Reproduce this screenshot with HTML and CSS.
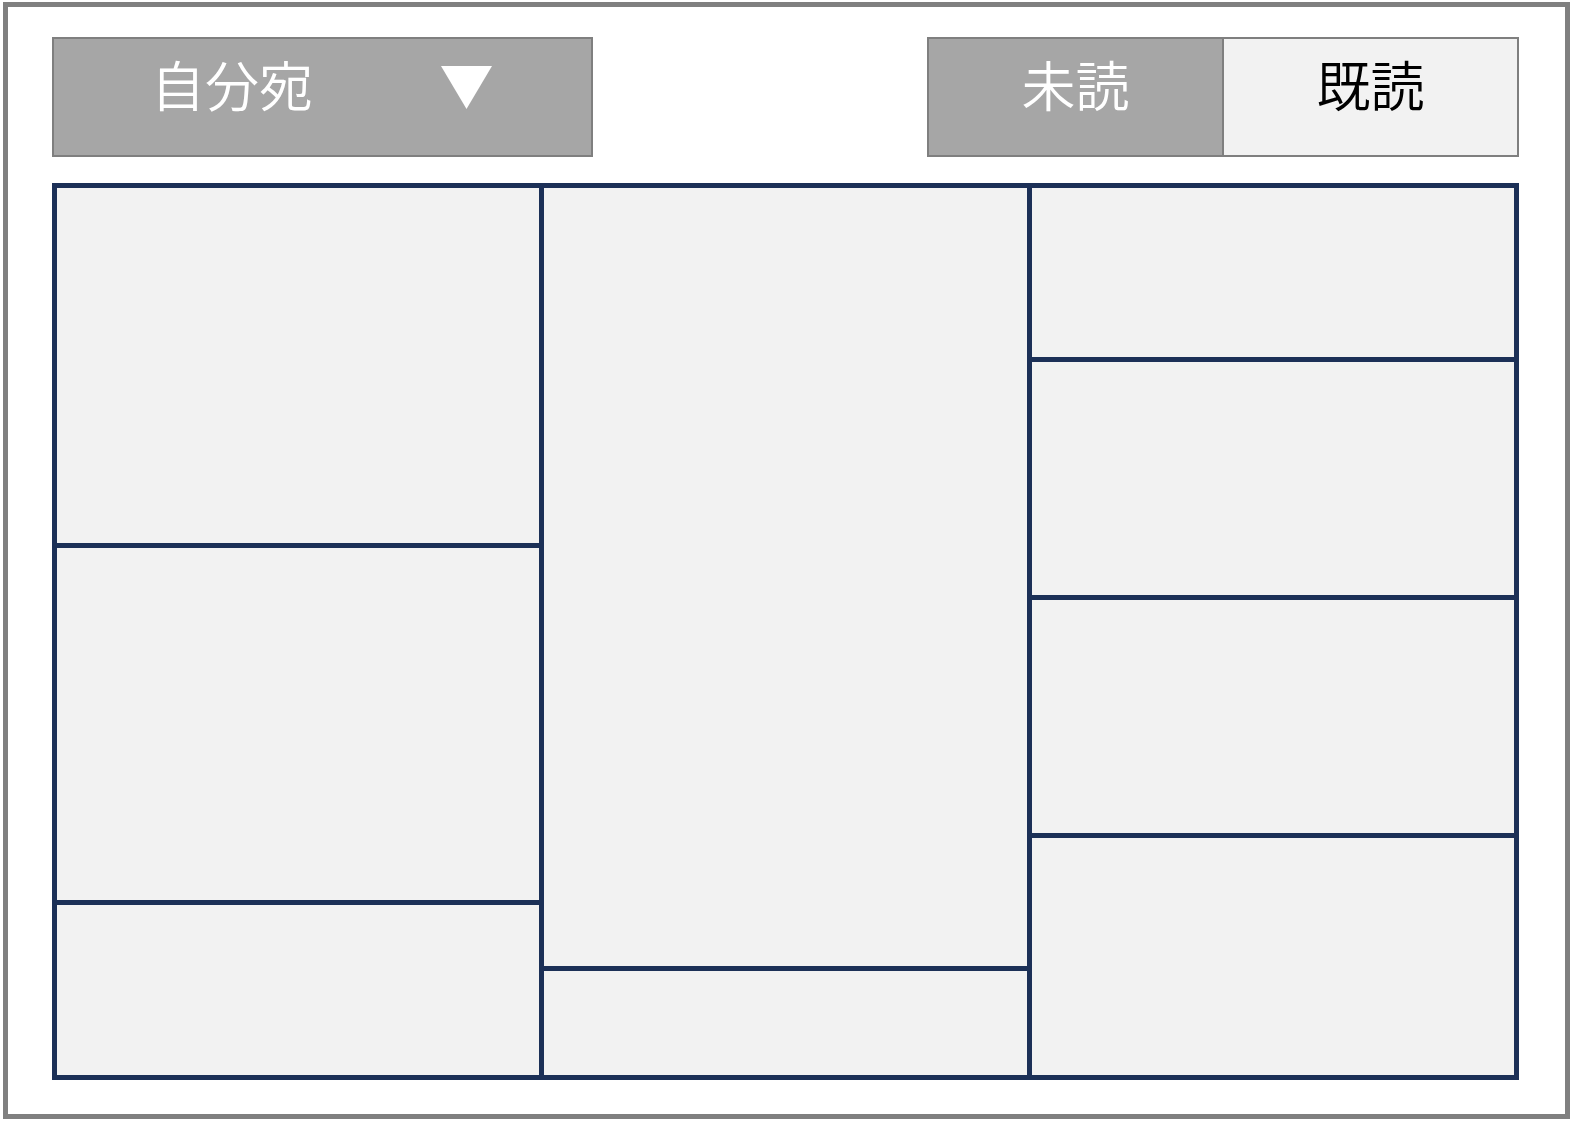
FILE: index.html
```html
<!DOCTYPE html>
<html lang="ja">
<head>
    <meta charset="UTF-8">
    <title>メッセージ一覧</title>
    <link rel="stylesheet" href="styles.css">
</head>
<body>
<div class="frame">
    <div class="header">
        <div class="dropdown">
            <span class="dropdown-label">自分宛</span>
            <svg class="dropdown-arrow" width="51" height="43" viewBox="0 0 51 43">
                <polygon points="0,0 51,0 25.5,43" fill="#fff" />
            </svg>
        </div>
        <div class="toggle">
            <div class="toggle-item active">未読</div>
            <div class="toggle-item">既読</div>
        </div>
    </div>

    <div class="board">
        <div class="column">
            <div class="cell" style="height: 355px"></div>
            <div class="cell" style="height: 352px"></div>
            <div class="cell grow"></div>
        </div>
        <div class="column">
            <div class="cell" style="height: 778px"></div>
            <div class="cell grow"></div>
        </div>
        <div class="column">
            <div class="cell" style="height: 169px"></div>
            <div class="cell" style="height: 233px"></div>
            <div class="cell" style="height: 233px"></div>
            <div class="cell grow"></div>
        </div>
    </div>
</div>
</body>
</html>
```

FILE: styles.css
```css
* {
    margin: 0;
    padding: 0;
    box-sizing: border-box;
}
body {
    background: #fff;
    font-family: "Noto Sans CJK JP", "Noto Sans", sans-serif;
}
/*外枠*/
.frame {
    width: 1567px;
    height: 1117px;
    margin: 2px 0 0 3px;
    border: 5px solid #808080;
    padding: 30px 46px 0 44px;
}
.header {
    display: flex;
    justify-content: space-between;
    height: 120px;
}
.dropdown {
    width: 541px;
    display: flex;
    align-items: flex-start;
    gap: 128px;
    padding: 18px 0 0 97px;
    background: #a6a6a6;
    border: 2px solid #7f7f7f;
    color: #fff;
}
.dropdown-label {
    font-size: 54px;
    font-weight: 350;
    line-height: 1;
}
.dropdown-arrow {
    margin-top: 9px;
}
/*未読・既読切替*/
.toggle {
    width: 592px;
    display: flex;
    border: 2px solid #7f7f7f;
}
.toggle-item {
    flex: 1;
    text-align: center;
    font-size: 54px;
    font-weight: 350;
    line-height: 1;
    padding-top: 18px;
    background: #f2f2f2;
    color: #000;
}
.toggle-item.active {
    background: #a6a6a6;
    color: #fff;
    border-right: 2px solid #7f7f7f;
}
/*一覧*/
.board {
    margin-top: 26px;
    width: 1467px;
    height: 897px;
    display: flex;
    gap: 5px;
    padding: 5px;
    background: #1c3057;
}
.column {
    flex: 1;
    display: flex;
    flex-direction: column;
    gap: 5px;
}
.cell {
    background: #f2f2f2;
    flex-shrink: 0;
}
.cell.grow {
    flex: 1;
}
```
